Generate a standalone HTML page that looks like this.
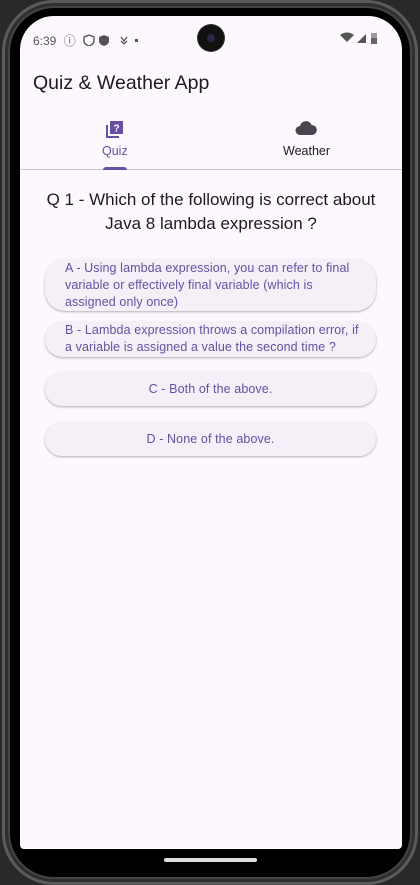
<!DOCTYPE html>
<html><head><meta charset="utf-8"><style>
*{margin:0;padding:0;box-sizing:border-box}
html,body{width:420px;height:885px;overflow:hidden;background:#27292b;font-family:"Liberation Sans",sans-serif}
.phone{position:absolute;left:2px;top:0;width:416px;height:885px;border-radius:52px;background:#000;border:3px solid #5a5b5d;box-shadow:inset 0 0 0 3px #2e2f31, inset 0 0 0 5px #444}
.screen{position:absolute;left:20px;top:16px;width:382px;height:833px;background:#fdf7fe;border-radius:34px 34px 4px 4px;overflow:hidden}
.status{position:absolute;top:16px;left:13px;font-size:12px;color:#555;}
.cam{position:absolute;left:178px;top:9px;width:26px;height:26px;border-radius:50%;background:#111;box-shadow:0 0 0 1px #333}
.cam:after{content:"";position:absolute;left:9px;top:9px;width:8px;height:8px;border-radius:50%;background:#2a2a44}
.title{position:absolute;left:13px;top:56px;font-size:19.5px;color:#1c1b1f}
.tab{position:absolute;top:128px;font-size:12.5px;text-align:center}
.line{position:absolute;left:0;top:153px;width:382px;height:1px;background:#cac4d0}
.ind{position:absolute;left:83px;top:151px;width:24px;height:3px;background:#6750a4;border-radius:3px 3px 0 0}
.q{position:absolute;left:0;width:382px;top:172px;text-align:center;font-size:17px;line-height:24px;color:#1c1b1f}
.btn{position:absolute;left:25px;width:331px;background:#f5eff7;border-radius:20px;box-shadow:0 1px 2px rgba(0,0,0,.3);color:#6750a4;font-size:12.5px;line-height:17px;letter-spacing:0.1px;white-space:nowrap}
.l{padding:0 20px}
.c{text-align:center}
.bar{position:absolute;left:164px;top:858px;width:93px;height:4px;background:#ddd;border-radius:2px}
</style></head><body>
<div class="phone"></div>
<div class="screen">
 <div class="status">6:39 <span style="margin-left:4px">ⓘ</span>
  <svg width="60" height="12" style="vertical-align:-1px"><path d="M4 1l5 2v4c0 2.5-2 4-5 5-3-1-5-2.5-5-5V3z" transform="translate(6,0)" fill="none" stroke="#555" stroke-width="1.4"/><path d="M25 1l5 2v4c0 2.5-2 4-5 5-3-1-5-2.5-5-5V3z" fill="#555"/><path d="M42 3l3 4 3-4M42 7l3 3 3-3" fill="none" stroke="#555" stroke-width="1.3"/><rect x="56" y="5" width="3" height="3" fill="#555"/></svg>
 </div>
 <div class="cam"></div>
 <svg style="position:absolute;left:320px;top:16px" width="40" height="12"><path d="M0 3q7-5 14 0l-7 7z" fill="#555"/><path d="M17 11h9V2z" fill="#555"/><rect x="31" y="1" width="6" height="11" fill="#999"/><rect x="31" y="6" width="6" height="6" fill="#666"/></svg>
 <div class="title">Quiz &amp; Weather App</div>
 <svg style="position:absolute;left:85px;top:104px" width="20" height="20" viewBox="0 0 20 20"><path d="M1 5v13h13v-2H3V5z" fill="#6750a4"/><rect x="5" y="1" width="13" height="13" fill="#6750a4"/><text x="11.5" y="11.5" font-size="10" font-weight="bold" fill="#fff" text-anchor="middle" font-family="Liberation Sans">?</text></svg>
 <div class="tab" style="left:82px;color:#6750a4">Quiz</div>
 <svg style="position:absolute;left:275px;top:104px" width="22" height="16" viewBox="0 0 22 16"><path d="M5 15a4.5 4.5 0 0 1 0-9 6 6 0 0 1 11.5-1A5 5 0 0 1 17 15z" fill="#49454f"/></svg>
 <div class="tab" style="left:263px;color:#1c1b1f">Weather</div>
 <div class="line"></div><div class="ind"></div>
 <div class="q">Q 1 - Which of the following is correct about<br>Java 8 lambda expression ?</div>
 <div class="btn l" style="top:243px;height:52px;padding-top:1px">A - Using lambda expression, you can refer to final<br>variable or effectively final variable (which is<br>assigned only once)</div>
 <div class="btn l" style="top:306px;height:35px;padding-top:0px">B - Lambda expression throws a compilation error, if<br>a variable is assigned a value the second time ?</div>
 <div class="btn c" style="top:356px;height:34px;line-height:34px">C - Both of the above.</div>
 <div class="btn c" style="top:406px;height:34px;line-height:34px">D - None of the above.</div>
</div>
<div class="bar"></div>
</body></html>
